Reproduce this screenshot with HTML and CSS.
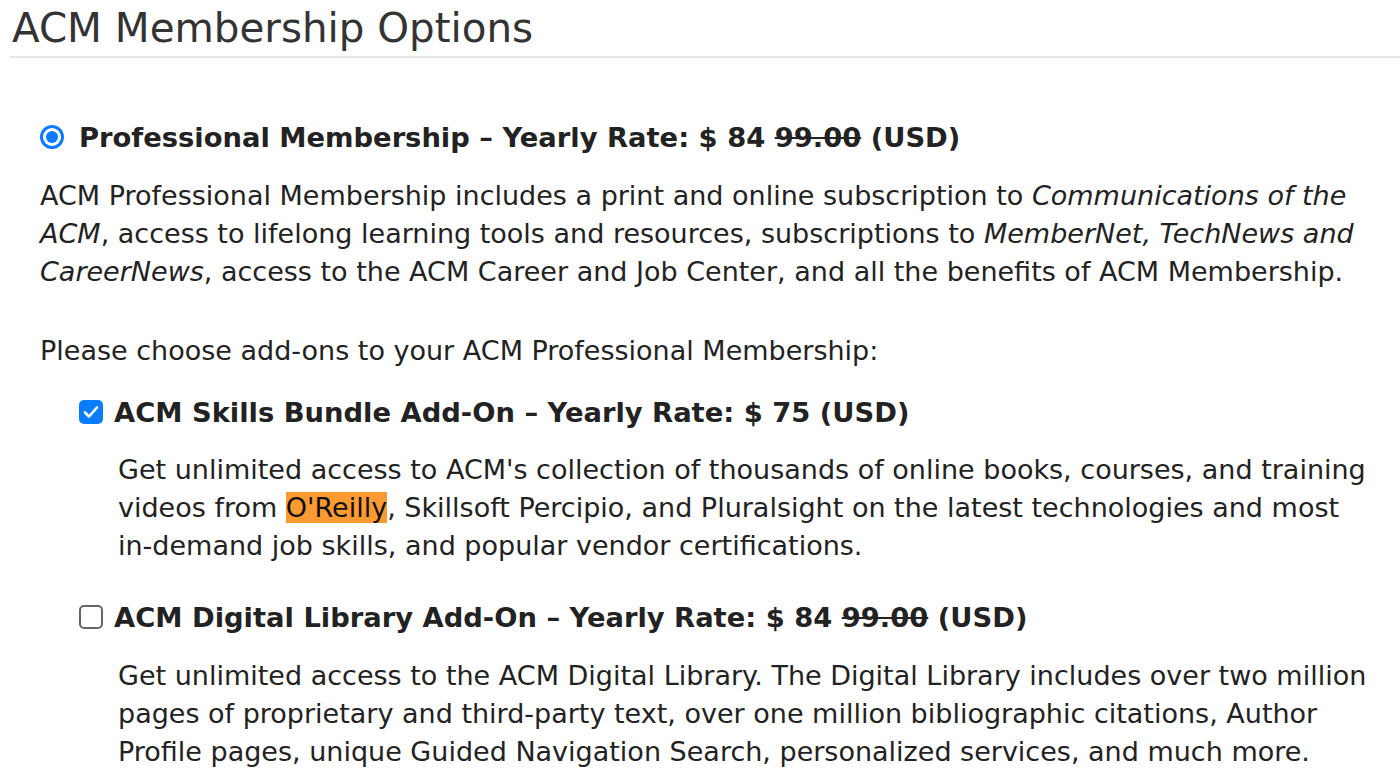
FILE: index.html
```html
<!DOCTYPE html>
<html>
<head>
<meta charset="utf-8">
<link rel="stylesheet" href="styles.css">
</head>
<body>
<div class="page">
  <h1 class="title">ACM Membership Options</h1>
  <div class="option">
    <div class="opt-label">
      <span class="radio"><span class="dot"></span></span>
      <span class="opt-text">Professional Membership – Yearly Rate: $ 84 <s>99.00</s> (USD)</span>
    </div>
    <p class="desc">ACM Professional Membership includes a print and online subscription to <i>Communications of the ACM</i>, access to lifelong learning tools and resources, subscriptions to <i>MemberNet, TechNews and CareerNews</i>, access to the ACM Career and Job Center, and all the benefits of ACM Membership.</p>
    <p class="choose">Please choose add-ons to your ACM Professional Membership:</p>
    <div class="addon">
      <div class="add-label">
        <span class="check on"><svg viewBox="0 0 24 24" width="24" height="24"><path d="M6 12.5 L10 16.5 L18 7.5" fill="none" stroke="#fff" stroke-width="2.6" stroke-linecap="round" stroke-linejoin="round"/></svg></span>
        <span class="opt-text">ACM Skills Bundle Add-On – Yearly Rate: $ 75 (USD)</span>
      </div>
      <p class="add-desc">Get unlimited access to ACM's collection of thousands of online books, courses, and training videos from <mark>O'Reilly</mark>, Skillsoft Percipio, and Pluralsight on the latest technologies and most in-demand job skills, and popular vendor certifications.</p>
    </div>
    <div class="addon">
      <div class="add-label">
        <span class="check"></span>
        <span class="opt-text">ACM Digital Library Add-On – Yearly Rate: $ 84 <s>99.00</s> (USD)</span>
      </div>
      <p class="add-desc">Get unlimited access to the ACM Digital Library. The Digital Library includes over two million pages of proprietary and third-party text, over one million bibliographic citations, Author Profile pages, unique Guided Navigation Search, personalized services, and much more.</p>
    </div>
  </div>
</div>
</body>
</html>
```
FILE: styles.css
```css
html, body {
  margin: 0;
  padding: 0;
  background: #fff;
}
body {
  font-family: "DejaVu Sans", Verdana, sans-serif;
  color: #222;
  overflow: hidden;
}
.page {
  padding-left: 10px;
}
.title {
  margin: 0;
  padding: 6px 0 6px 2px;
  font-size: 40.4px;
  font-weight: normal;
  line-height: 44px;
  color: #333;
  border-bottom: 2px solid #e6e6e6;
}
.option {
  padding: 60px 25px 0 30px;
}
.opt-label {
  display: flex;
  align-items: center;
  gap: 15px;
  height: 38px;
}
.opt-text {
  font-weight: bold;
  font-size: 27.35px;
  color: #222;
  white-space: nowrap;
}
.radio {
  width: 24px;
  height: 24px;
  border-radius: 50%;
  background: #0a7cff;
  display: flex;
  align-items: center;
  justify-content: center;
  flex: none;
}
.radio .dot {
  width: 12px;
  height: 12px;
  border-radius: 50%;
  background: #0a7cff;
  box-shadow: 0 0 0 3px #fff;
}
.desc, .choose, .add-desc {
  font-size: 27px;
  line-height: 38px;
  margin: 0;
  color: #222;
}
.desc {
  margin-top: 21px;
}
.choose {
  margin-top: 41px;
}
.addon {
  padding-left: 39px;
}
.addon + .addon {
  padding-top: 10px;
}
.add-label {
  display: flex;
  align-items: center;
  gap: 11px;
  height: 38px;
  margin-top: 23px;
}
.check {
  width: 24px;
  height: 24px;
  box-sizing: border-box;
  border: 2px solid #666;
  border-radius: 5px;
  flex: none;
  background: #fff;
}
.check.on {
  border: none;
  background: #0a7cff;
}
.check svg {
  display: block;
}
.add-desc {
  margin-top: 20px;
  padding-left: 39px;
}
.addon + .addon .add-desc {
  margin-top: 21px;
}
mark {
  background: #ff9a33;
  color: #111;
}
```
